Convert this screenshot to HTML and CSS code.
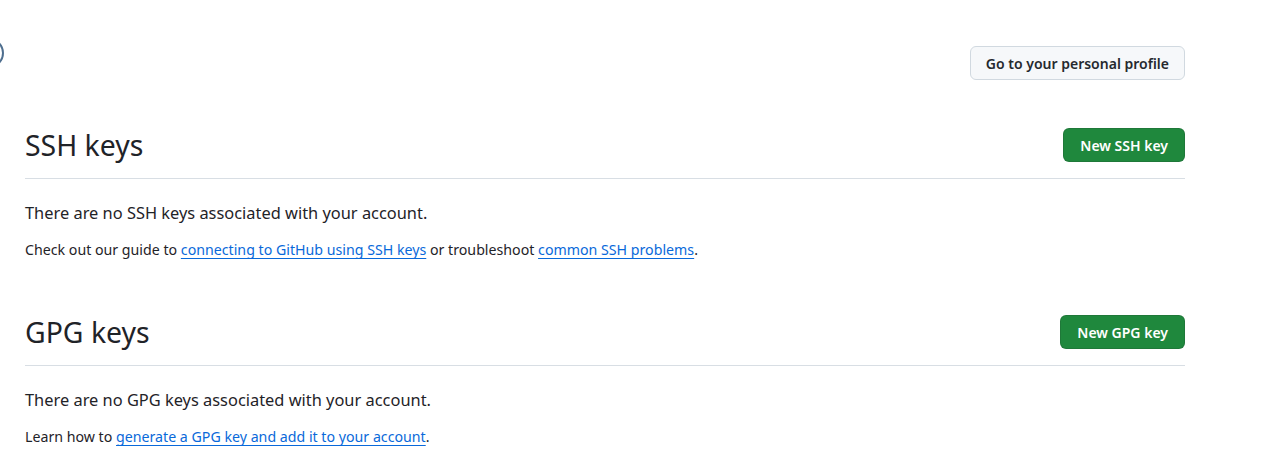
FILE: index.html
```html
<!DOCTYPE html>
<html>
<head>
<meta charset="utf-8">
<link rel="stylesheet" href="styles.css">
</head>
<body>
<div class="avatar-edge"></div>
<main class="page">
  <div class="top-row">
    <a class="btn btn-default" href="#">Go to your personal profile</a>
  </div>

  <section class="section">
    <div class="subhead">
      <h2 class="subhead-title">SSH keys</h2>
      <a class="btn btn-primary" href="#">New SSH key</a>
    </div>
    <p class="lead">There are no SSH keys associated with your account.</p>
    <p class="note">Check out our guide to <a href="#">connecting to GitHub using SSH keys</a> or troubleshoot <a href="#">common SSH problems</a>.</p>
  </section>

  <section class="section">
    <div class="subhead">
      <h2 class="subhead-title">GPG keys</h2>
      <a class="btn btn-primary" href="#">New GPG key</a>
    </div>
    <p class="lead">There are no GPG keys associated with your account.</p>
    <p class="note">Learn how to <a href="#">generate a GPG key and add it to your account</a>.</p>
  </section>
</main>
</body>
</html>
```
FILE: styles.css
```css
* { box-sizing: border-box; }
html, body { margin: 0; padding: 0; background: #ffffff; }
body {
  font-family: "Noto Sans", "Open Sans", sans-serif;
  color: #1f2328;
  overflow: hidden;
  position: relative;
}
.avatar-edge {
  position: absolute;
  left: -26px;
  top: 38px;
  width: 30px;
  height: 30px;
  border-radius: 50%;
  border: 2px solid #4f6f8f;
}
.page {
  width: 1160px;
  margin-left: 25px;
  padding-top: 46px;
}
.top-row {
  display: flex;
  justify-content: flex-end;
  margin-bottom: 48px;
}
.btn {
  display: inline-flex;
  align-items: center;
  height: 34px;
  padding: 0 16px;
  border-radius: 6px;
  font-size: 14px;
  font-weight: 600;
  text-decoration: none;
  white-space: nowrap;
}
.btn-default {
  background: #f6f8fa;
  color: #25292e;
  border: 1px solid #d1d9e0;
  padding: 0 15px;
}
.btn-primary {
  background: #1f883d;
  color: #ffffff;
  border: 1px solid rgba(31, 35, 40, 0.15);
}
.subhead {
  display: flex;
  justify-content: space-between;
  align-items: center;
  padding-bottom: 15px;
  border-bottom: 1px solid #d8dee4;
}
.section:first-of-type .subhead { margin-top: -1px; }
.subhead-title {
  margin: 0;
  font-size: 28.4px;
  font-weight: 400;
  line-height: 36px;
}
.section + .section { margin-top: 54px; }
.lead {
  margin: 22px 0 0;
  font-size: 16.4px;
  line-height: 24px;
}
.note {
  margin: 14px 0 0;
  font-size: 14.2px;
  line-height: 21px;
}
.note a {
  color: #0969da;
  text-decoration: underline;
  text-underline-offset: 3px;
}
```
